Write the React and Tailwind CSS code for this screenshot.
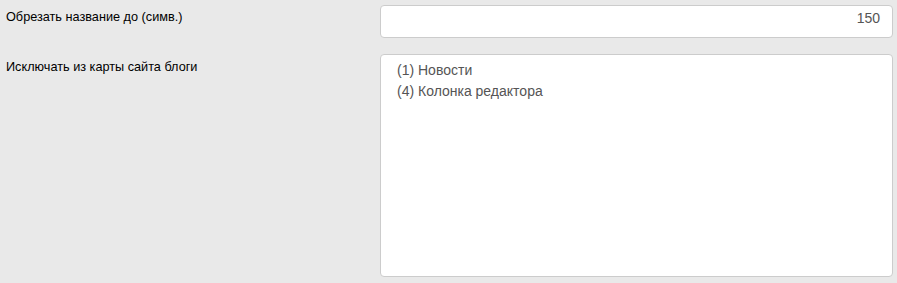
export default function App() {
  return (
    <div
      className="w-[897px] h-[283px] bg-[#e9e9e9] flex flex-col pt-[5px]"
      style={{ fontFamily: '"Liberation Sans", Arial, sans-serif' }}
    >
      {/* Trim title */}
      <div className="flex">
        <label className="w-[380px] pl-[6px] pt-[4px] text-[12.7px] leading-[17px] text-black">
          Обрезать название до (симв.)
        </label>
        <div className="w-[513px] h-[33px] bg-white border border-[#cccccc] rounded-[4px] pr-[12px] pt-[2px] text-right text-[14px] leading-[20px] text-[#555555]">
          150
        </div>
      </div>

      {/* Excluded blogs */}
      <div className="flex mt-[16px]">
        <label className="w-[380px] pl-[6px] pt-[5px] text-[12.7px] leading-[17px] text-black">
          Исключать из карты сайта блоги
        </label>
        <div className="w-[513px] h-[223px] bg-white border border-[#cccccc] rounded-[4px] pl-[16px] pt-[5px] text-[14px] leading-[21px] text-[#555555]">
          <div>(1) Новости</div>
          <div>(4) Колонка редактора</div>
        </div>
      </div>
    </div>
  );
}
